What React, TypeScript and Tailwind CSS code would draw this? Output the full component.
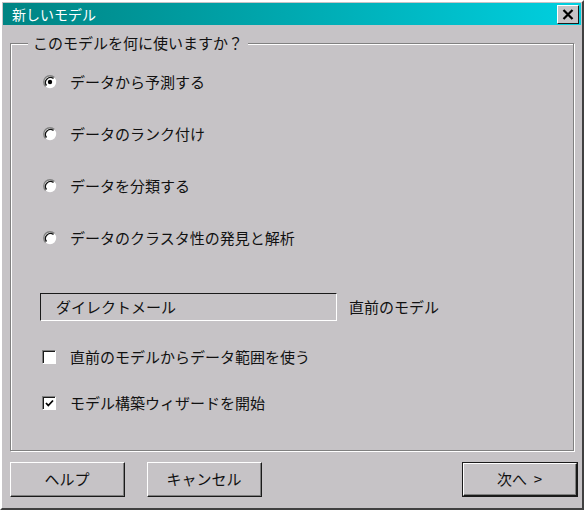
import React from "react";

const font = { fontFamily: '"Noto Sans CJK JP", "Noto Sans", sans-serif' };

function Radio({ checked }: { checked?: boolean }) {
    return (
        <svg width="14" height="14" viewBox="0 0 14 14" className="shrink-0">
            <circle cx="7" cy="7" r="6.2" fill="#ffffff" />
            <path d="M11.4 2.6 A6.2 6.2 0 0 0 2.6 11.4" fill="none" stroke="#808080" strokeWidth="1.4" />
            <path d="M10.5 3.5 A5 5 0 0 0 3.5 10.5" fill="none" stroke="#111111" strokeWidth="1.3" />
            {checked && <circle cx="7" cy="7" r="2.2" fill="#000" />}
        </svg>
    );
}

function Check({ checked }: { checked?: boolean }) {
    return (
        <div className="w-[14px] h-[14px] shrink-0 border-t border-l border-[#808080] border-r border-b border-r-white border-b-white">
            <div className="w-full h-full bg-white border-t border-l border-[#1a1a1a] flex items-center justify-center">
                {checked && (
                    <svg width="9" height="9" viewBox="0 0 9 9">
                        <path d="M1 4 L3.3 6.5 L8 1.5" fill="none" stroke="#000" strokeWidth="1.8" />
                    </svg>
                )}
            </div>
        </div>
    );
}

function Button({ label, isDefault }: { label: string; isDefault?: boolean }) {
    const inner = (
        <div className="w-full h-full border-t border-l border-white border-r border-b border-r-[#1a1a1a] border-b-[#1a1a1a]">
            <div className="w-full h-full border-r border-b border-[#808080] flex items-center justify-center text-[15px] text-[#111] whitespace-pre">
                {label}
            </div>
        </div>
    );
    return (
        <div className={isDefault ? "w-[116px] h-[35px] border border-[#1a1a1a]" : "w-[115px] h-[35px]"}>{inner}</div>
    );
}

export default function App() {
    return (
        <div
            className="w-[584px] h-[510px] bg-[#c6c3c6] border-t-2 border-l-2 border-white border-r-2 border-b-2 border-r-[#404040] border-b-[#404040] flex flex-col p-[1px]"
            style={font}
        >
            {/* title bar */}
            <div className="h-[22px] shrink-0 bg-gradient-to-r from-[#008483] to-[#00d0e0] flex items-center justify-between pl-[9px] pr-[2px]">
                <span className="text-white text-[14px] leading-none">新しいモデル</span>
                <div className="w-[22px] h-[19px] bg-[#c6c3c6] border-t border-l border-white border-r border-b border-r-[#1a1a1a] border-b-[#1a1a1a] flex items-center justify-center">
                    <svg width="12" height="11" viewBox="0 0 12 11">
                        <path d="M1.5 1 L10.5 10 M10.5 1 L1.5 10" stroke="#000" strokeWidth="2.2" />
                    </svg>
                </div>
            </div>

            {/* group box */}
            <div className="relative mt-[18px] mx-[7px] h-[408px] border border-[#808080] shadow-[1px_1px_0_#ffffff,inset_1px_1px_0_#ffffff]">
                <span className="absolute -top-[12px] left-[17px] px-[5px] bg-[#c6c3c6] text-[15px] text-[#111]">
                    このモデルを何に使いますか？
                </span>
                <div className="flex flex-col pl-[32px] pt-[27px] text-[15px] text-[#111]">
                    <div className="flex flex-col gap-[30px]">
                        {[
                            ["データから予測する", true],
                            ["データのランク付け", false],
                            ["データを分類する", false],
                            ["データのクラスタ性の発見と解析", false],
                        ].map(([t, c]) => (
                            <div key={t as string} className="flex items-center gap-[13px] h-[22px]">
                                <Radio checked={c as boolean} />
                                <span>{t}</span>
                            </div>
                        ))}
                    </div>
                    <div className="flex items-center gap-[12px] mt-[44px] -ml-[3px]">
                        <div className="w-[297px] h-[28px] border-t border-l border-[#1a1a1a] border-r border-b border-r-white border-b-white flex items-center pl-[15px]">
                            ダイレクトメール
                        </div>
                        <span>直前のモデル</span>
                    </div>
                    <div className="flex flex-col gap-[24px] mt-[25px] -ml-[1px]">
                        <div className="flex items-center gap-[14px] h-[22px]">
                            <Check />
                            <span>直前のモデルからデータ範囲を使う</span>
                        </div>
                        <div className="flex items-center gap-[14px] h-[22px]">
                            <Check checked />
                            <span>モデル構築ウィザードを開始</span>
                        </div>
                    </div>
                </div>
            </div>

            {/* buttons */}
            <div className="flex items-center mt-[11px] pl-[7px] pr-[3px] gap-[22px]">
                <Button label="ヘルプ" />
                <Button label="キャンセル" />
                <div className="ml-auto">
                    <Button label={"次へ  >"} isDefault />
                </div>
            </div>
        </div>
    );
}
